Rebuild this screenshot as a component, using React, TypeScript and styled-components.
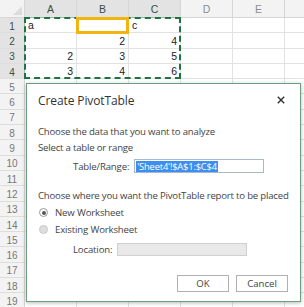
import React from "react";
import styled, { createGlobalStyle } from "styled-components";

const GlobalStyle = createGlobalStyle`
  html, body {
    margin: 0;
    padding: 0;
    background: #ffffff;
    overflow: hidden;
  }
`;

const COLS = ["A", "B", "C", "D", "E", "F"];
const ROW_COUNT = 19;
const ROW_H = 15.3;
const HEAD_H = 18;
const COL_W = 52;
const ROWHEAD_W = 25;

// cell contents of the sheet, keyed "col+row"
const data: Record<string, { v: string; num?: boolean }> = {
  A1: { v: "a" },
  C1: { v: "c" },
  B2: { v: "2", num: true },
  C2: { v: "4", num: true },
  A3: { v: "2", num: true },
  B3: { v: "3", num: true },
  C3: { v: "5", num: true },
  A4: { v: "3", num: true },
  B4: { v: "4", num: true },
  C4: { v: "6", num: true },
};

const Sheet = styled.div`
  position: relative;
  width: 304px;
  height: 307px;
  overflow: hidden;
  background: #ffffff;
  font-family: "Liberation Sans", Arial, sans-serif;
`;

const Grid = styled.div`
  display: grid;
  grid-template-columns: ${ROWHEAD_W}px repeat(${COLS.length}, ${COL_W}px);
  grid-template-rows: ${HEAD_H}px repeat(${ROW_COUNT}, ${ROW_H}px);
`;

const Corner = styled.div`
  position: relative;
  background: #f3f3f3;
  border-right: 1px solid #d6d6d6;
  border-bottom: 1px solid #d6d6d6;

  &::after {
    content: "";
    position: absolute;
    right: 2px;
    bottom: 2px;
    border-left: 9px solid transparent;
    border-bottom: 9px solid #dcdcdc;
  }
`;

const ColHead = styled.div<{ $active?: boolean }>`
  display: flex;
  align-items: center;
  justify-content: center;
  background: ${(p) => (p.$active ? "#e3e3e3" : "#f3f3f3")};
  color: ${(p) => (p.$active ? "#3a4f43" : "#8c8c8c")};
  border-right: 1px solid #d6d6d6;
  border-bottom: 1px solid ${(p) => (p.$active ? "#9fbfab" : "#d6d6d6")};
  font-size: 10.5px;
  box-sizing: border-box;
`;

const RowHead = styled.div<{ $active?: boolean }>`
  display: flex;
  align-items: center;
  justify-content: center;
  padding-top: 2px;
  background: ${(p) => (p.$active ? "#e3e3e3" : "#f3f3f3")};
  color: ${(p) => (p.$active ? "#3a4f43" : "#777777")};
  border-right: 1px solid ${(p) => (p.$active ? "#9fbfab" : "#d6d6d6")};
  border-bottom: 1px solid #dddddd;
  font-size: 10px;
  box-sizing: border-box;
`;

const Cell = styled.div<{ $num?: boolean }>`
  display: flex;
  align-items: flex-end;
  justify-content: ${(p) => (p.$num ? "flex-end" : "flex-start")};
  padding: 0 3px 1px 3px;
  border-right: 1px solid #e2e2e2;
  border-bottom: 1px solid #e2e2e2;
  font-size: 10.5px;
  color: #222222;
  box-sizing: border-box;
  overflow: hidden;
`;

const Marquee = styled.div`
  position: absolute;
  left: ${ROWHEAD_W - 1}px;
  top: ${HEAD_H - 1}px;
  width: ${COL_W * 3 + 1}px;
  height: ${ROW_H * 4 + 1}px;
  border: 2px dashed #1f7244;
  box-sizing: border-box;
  pointer-events: none;
`;

const ActiveCell = styled.div`
  position: absolute;
  left: ${ROWHEAD_W + COL_W - 1}px;
  top: ${HEAD_H - 1}px;
  width: ${COL_W + 1}px;
  height: ${ROW_H + 2}px;
  border: 3px solid #f2b50f;
  box-sizing: border-box;
`;

const Dialog = styled.div`
  position: absolute;
  left: 26px;
  top: 83px;
  width: 275px;
  height: 219px;
  box-sizing: border-box;
  background: #ffffff;
  border: 1px solid #6f9d82;
  box-shadow: 0 1px 4px rgba(0, 0, 0, 0.28);
  padding: 7px 11px 0 11px;
  display: flex;
  flex-direction: column;
  font-family: "Open Sans", "Noto Sans", sans-serif;
  color: #444444;
`;

const TitleBar = styled.div`
  display: flex;
  align-items: center;
  justify-content: space-between;
  height: 18px;
`;

const Title = styled.div`
  font-size: 12px;
  color: #333333;
  letter-spacing: -0.1px;
`;

const CloseBtn = styled.div`
  width: 12px;
  height: 12px;
  margin-right: 2px;
  display: flex;
  align-items: center;
  justify-content: center;
`;

const Line = styled.div<{ $gap?: number }>`
  font-size: 9.6px;
  line-height: 15px;
  height: 15px;
  margin-top: ${(p) => p.$gap ?? 0}px;
  white-space: nowrap;
  letter-spacing: -0.2px;
`;

const FieldRow = styled.div<{ $gap: number; $indent: number }>`
  display: flex;
  align-items: center;
  margin-top: ${(p) => p.$gap}px;
  padding-left: ${(p) => p.$indent}px;
  gap: 5px;
  font-size: 9.6px;
  letter-spacing: -0.15px;
`;

const TextBox = styled.div<{ $disabled?: boolean; $width: number; $height: number }>`
  width: ${(p) => p.$width}px;
  height: ${(p) => p.$height}px;
  box-sizing: border-box;
  border: 1px solid ${(p) => (p.$disabled ? "#cfcfcf" : "#a9b8c9")};
  background: ${(p) => (p.$disabled ? "#e9e9e9" : "#ffffff")};
  display: flex;
  align-items: center;
  padding-left: 1px;
`;

const Selected = styled.span`
  background: #3c8ef0;
  color: #ffffff;
  font-size: 9.4px;
  line-height: 11px;
  padding: 0 1px;
  letter-spacing: -0.2px;
`;

const RadioRow = styled.div<{ $gap: number }>`
  display: flex;
  align-items: center;
  height: 15px;
  margin-top: ${(p) => p.$gap}px;
  gap: 7px;
  padding-left: 1px;
  font-size: 9.6px;
  letter-spacing: -0.15px;
`;

const Radio = styled.span<{ $checked?: boolean }>`
  width: 9px;
  height: 9px;
  border-radius: 50%;
  box-sizing: border-box;
  border: 1px solid ${(p) => (p.$checked ? "#9a9a9a" : "#c9c9c9")};
  background: ${(p) => (p.$checked ? "#ffffff" : "#dedede")};
  display: flex;
  align-items: center;
  justify-content: center;

  &::after {
    content: "";
    width: 4px;
    height: 4px;
    border-radius: 50%;
    background: ${(p) => (p.$checked ? "#555555" : "transparent")};
  }
`;

const Buttons = styled.div`
  display: flex;
  justify-content: flex-end;
  gap: 7px;
  margin-top: 19px;
  padding-right: 1px;
`;

const Button = styled.div`
  width: 52px;
  height: 17px;
  box-sizing: border-box;
  border: 1px solid #b0b0b0;
  background: #ffffff;
  display: flex;
  align-items: center;
  justify-content: center;
  font-size: 9.6px;
  color: #444444;
`;

export default function App() {
  const cells: React.ReactNode[] = [];
  cells.push(<Corner key="corner" />);
  COLS.forEach((c, i) => {
    // the last column only peeks in at the right edge, its letter is off screen
    cells.push(
      <ColHead key={`h${c}`} $active={i < 3}>
        {i < COLS.length - 1 ? c : null}
      </ColHead>
    );
  });
  for (let r = 1; r <= ROW_COUNT; r++) {
    cells.push(
      <RowHead key={`r${r}`} $active={r <= 4}>
        {r}
      </RowHead>
    );
    COLS.forEach((c) => {
      const d = data[`${c}${r}`];
      cells.push(
        <Cell key={`${c}${r}`} $num={d?.num}>
          {d?.v}
        </Cell>
      );
    });
  }

  return (
    <>
      <GlobalStyle />
      <Sheet>
        <Grid>{cells}</Grid>
        <Marquee />
        <ActiveCell />
        <Dialog>
          <TitleBar>
            <Title>Create PivotTable</Title>
            <CloseBtn>
              <svg width="8" height="8" viewBox="0 0 8 8">
                <path d="M0.8 0.8 L7.2 7.2 M7.2 0.8 L0.8 7.2" stroke="#333" strokeWidth="1.4" />
              </svg>
            </CloseBtn>
          </TitleBar>
          <Line $gap={15}>Choose the data that you want to analyze</Line>
          <Line $gap={1}>Select a table or range</Line>
          <FieldRow $gap={4} $indent={35}>
            <span>Table/Range:</span>
            <TextBox $width={130} $height={14}>
              <Selected>'Sheet4'!$A$1:$C$4</Selected>
            </TextBox>
          </FieldRow>
          <Line $gap={15}>Choose where you want the PivotTable report to be placed</Line>
          <RadioRow $gap={2}>
            <Radio $checked />
            <span>New Worksheet</span>
          </RadioRow>
          <RadioRow $gap={2}>
            <Radio />
            <span>Existing Worksheet</span>
          </RadioRow>
          <FieldRow $gap={6} $indent={35}>
            <span>Location:</span>
            <TextBox $disabled $width={130} $height={13} />
          </FieldRow>
          <Buttons>
            <Button>OK</Button>
            <Button>Cancel</Button>
          </Buttons>
        </Dialog>
      </Sheet>
    </>
  );
}
